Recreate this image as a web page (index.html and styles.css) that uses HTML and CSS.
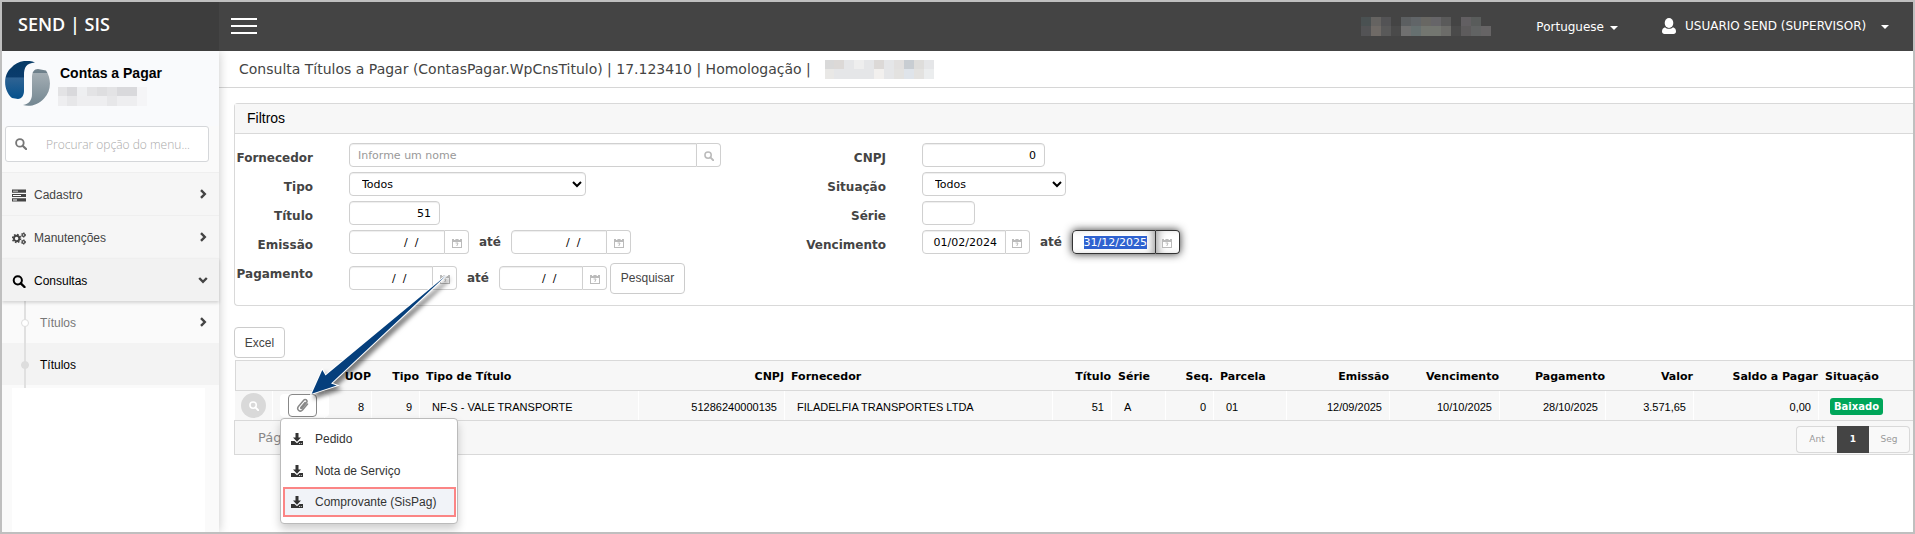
FILE: index.html
```html
<!DOCTYPE html>
<html lang="pt-BR">
<head>
<meta charset="utf-8">
<title>SEND | SIS - Consulta Títulos a Pagar</title>
<link rel="stylesheet" href="styles.css">
</head>
<body>
<svg class="defs" aria-hidden="true">
  <symbol id="i-search" viewBox="0 0 13 13"><circle cx="5.3" cy="5.3" r="4.1" fill="none" stroke="currentColor" stroke-width="2"/><path d="M8.3 8.3L12 12" stroke="currentColor" stroke-width="2.4" stroke-linecap="round"/></symbol>
  <symbol id="i-chev" viewBox="0 0 8 10"><path d="M2 1.2L5.8 5L2 8.8" fill="none" stroke="currentColor" stroke-width="2.4"/></symbol>
  <symbol id="i-cal" viewBox="0 0 10 10"><path d="M0 1h10v9H0z" fill="currentColor"/><path d="M1 4h8v5H1z" fill="#fff"/><path d="M2 0h1.400v2H2zM6.600 0H8v2H6.600z" fill="#fff"/><path d="M3.600 5h2.400L4.800 8" fill="none" stroke="currentColor"/></symbol>
  <symbol id="i-down" viewBox="0 0 12 12"><path d="M4.500 0h3v4.500H10L6 8.700 2 4.500h2.500z" fill="currentColor"/><path d="M0 8h3.500L6 10.200 8.500 8H12v4H0z" fill="currentColor"/><path d="M8 10.200h1v.9H8zM9.800 10.200h1v.9h-1z" fill="#fff"/></symbol>
  <symbol id="i-caret" viewBox="0 0 8 4"><path d="M0 0h8L4 4z" fill="currentColor"/></symbol>
</svg>
<div class="frame">
  <header class="topbar">
    <a class="brand" href="#">SEND | SIS</a>
    <div class="topbar-main">
      <button class="burger" type="button" aria-label="Alternar menu"><span></span><span></span><span></span></button>
      <svg class="mosaic mosaic-top" viewBox="0 0 130 19" preserveAspectRatio="none" shape-rendering="crispEdges" aria-hidden="true">
        <path fill="#4a5152" d="M0 0h10v9H0z"/><path fill="#656361" d="M10 0h10v9H10z"/><path fill="#535355" d="M20 0h10v9H20zM0 9h10v10H0z"/><path fill="#5c5f61" d="M40 0h10v9H40z"/><path fill="#616568" d="M50 0h10v9H50z"/><path fill="#686763" d="M60 0h10v9H60z"/><path fill="#666568" d="M70 0h10v9H70z"/><path fill="#5a5a5a" d="M80 0h10v9H80z"/><path fill="#625f62" d="M100 0h10v9h-10z"/><path fill="#595c5b" d="M110 0h10v9h-10z"/>
        <path fill="#6f6a66" d="M10 9h10v10H10z"/><path fill="#595959" d="M20 9h10v10H20z"/><path fill="#4a4a4a" d="M30 9h10v10H30zM90 9h10v10H90z"/><path fill="#707070" d="M40 9h10v10H40z"/><path fill="#667070" d="M50 9h10v10H50z"/><path fill="#737670" d="M60 9h20v10H60z"/><path fill="#6c6c69" d="M80 9h10v10H80z"/><path fill="#5d5b5c" d="M100 9h10v10h-10z"/><path fill="#616363" d="M110 9h10v10h-10z"/><path fill="#666465" d="M120 9h10v10h-10z"/>
      </svg>
      <button class="topmenu topmenu-lang" type="button">Portuguese<svg class="caret"><use href="#i-caret"/></svg></button>
      <button class="topmenu topmenu-user" type="button"><svg class="user" viewBox="0 0 14 16"><ellipse cx="7" cy="5" rx="4.300" ry="5" fill="#fff"/><path d="M3 9.200c2 2 6 2 8 0 2 .6 3 2.300 3 4.300 0 1.600-1 2.500-2.500 2.500h-9C1 16 0 15.100 0 13.500c0-2 1-3.700 3-4.300z" fill="#fff"/></svg>USUARIO SEND (SUPERVISOR)<svg class="caret"><use href="#i-caret"/></svg></button>
    </div>
  </header>
  <div class="body">
    <aside class="sidebar">
      <div class="profile">
        <svg class="logo" viewBox="0 0 45 45" aria-hidden="true">
          <defs>
            <linearGradient id="g1" x1="0" y1="0" x2="0" y2="1"><stop offset="0" stop-color="#063a66"/><stop offset=".42" stop-color="#0a3c6c"/><stop offset=".45" stop-color="#2f6393"/><stop offset="1" stop-color="#04508c"/></linearGradient>
            <linearGradient id="g2" x1="0" y1="0" x2="0" y2="1"><stop offset="0" stop-color="#73848e"/><stop offset=".1" stop-color="#6d7f8a"/><stop offset=".12" stop-color="#a3adb3"/><stop offset="1" stop-color="#738691"/></linearGradient>
          </defs>
          <path d="M30 1.500C21 2 19 7 19 14v16c0 5-3 8-6 8l-6-1C-2 29-2 14 6 7c6-7 16-9 24-5.500z" fill="url(#g1)"/>
          <path d="M27 16c0-5 2-8 6-8l8 1.500c6 9 5 21-2 28-6 7-15 8.500-21 6.500 6-1 9-5 9-11z" fill="url(#g2)"/>
        </svg>
        <div>
          <h2 class="profile-name">Contas a Pagar</h2>
          <svg class="mosaic mosaic-side" viewBox="0 0 89 19" preserveAspectRatio="none" shape-rendering="crispEdges" aria-hidden="true">
            <path fill="#e3e3e5" d="M0 0h79v9H0z"/><path fill="#d9d9dc" d="M9 0h10v9H9zM59 0h20v9H59z"/><path fill="#eeeff1" d="M19 0h10v9H19z"/><path fill="#dedee0" d="M39 0h10v9H39z"/><path fill="#f5f5f7" d="M79 0h10v19H79z"/><path fill="#eeeef0" d="M0 9h79v10H0z"/><path fill="#e7e7e9" d="M9 9h10v10H9zM49 9h10v10H49z"/>
          </svg>
        </div>
      </div>
      <label class="menu-search"><svg><use href="#i-search"/></svg><input type="text" placeholder="Procurar opção do menu..." aria-label="Procurar opção do menu"></label>
      <nav class="menu">
        <a class="menu-item" href="#"><svg class="menu-icon" viewBox="0 0 14 12"><path d="M0 0h14v3.200H0zM0 4.400h14v3.200H0zM0 8.800h14V12H0z" fill="currentColor"/><path d="M1 1.200h5v.9H1zM1 5.600h8v.9H1zM1 10h4v.9H1z" fill="#fff"/></svg>Cadastro<svg class="chev"><use href="#i-chev"/></svg></a>
        <a class="menu-item" href="#"><svg class="menu-icon" viewBox="0 0 14 13"><g fill="none" stroke="currentColor"><circle cx="4.600" cy="6.500" r="2.700" stroke-width="1.900"/><circle cx="4.600" cy="6.500" r="4" stroke-width="1.500" stroke-dasharray="1.570 1.570"/><circle cx="11.500" cy="3" r="1.400" stroke-width="1.200"/><circle cx="11.500" cy="3" r="2.200" stroke-dasharray="1.150 1.150"/><circle cx="11.500" cy="10" r="1.400" stroke-width="1.200"/><circle cx="11.500" cy="10" r="2.200" stroke-dasharray="1.150 1.150"/></g></svg>Manutenções<svg class="chev"><use href="#i-chev"/></svg></a>
        <a class="menu-item menu-item-open" href="#"><svg class="menu-icon"><use href="#i-search"/></svg>Consultas<svg class="chev chev-down"><use href="#i-chev"/></svg></a>
        <div class="submenu">
          <a class="sub-item" href="#"><i class="dot"></i>Títulos<svg class="chev"><use href="#i-chev"/></svg></a>
          <a class="sub-item sub-item-on" href="#"><i class="dot"></i>Títulos</a>
        </div>
      </nav>
      <div class="menu-rest"></div>
    </aside>
    <main class="main">
      <h1 class="title">Consulta Títulos a Pagar (ContasPagar.WpCnsTitulo) | 17.123410 | Homologação |
        <svg class="mosaic mosaic-title" viewBox="0 0 109 19" preserveAspectRatio="none" shape-rendering="crispEdges" aria-hidden="true">
          <path fill="#e5e6e8" d="M0 0h109v19H0z"/><path fill="#d9d9d9" d="M0 0h9v9H0z"/><path fill="#dcd9d7" d="M9 0h10v9H9zM49 0h10v9H49z"/><path fill="#eee" d="M29 0h10v9H29z"/><path fill="#e2e0df" d="M69 0h10v9H69z"/><path fill="#c8cdd2" d="M79 0h10v9H79z"/><path fill="#dedddb" d="M89 0h10v9H89z"/><path fill="#e9e8e6" d="M0 9h9v10H0z"/><path fill="#f2f0ee" d="M49 9h10v10H49z"/><path fill="#e3e2e0" d="M69 9h10v10H69zM89 9h10v10H89z"/><path fill="#dfe4ea" d="M79 9h10v10H79z"/><path fill="#ebedee" d="M99 9h10v10H99z"/>
        </svg>
      </h1>
      <form class="panel">
        <h2 class="panel-head">Filtros</h2>
        <div class="filters">
          <div class="col">
            <div class="row"><label for="forn">Fornecedor</label><div class="field"><span class="group"><input id="forn" class="w-name" type="text" placeholder="Informe um nome"><button type="button" aria-label="Buscar fornecedor"><svg><use href="#i-search"/></svg></button></span></div></div>
            <div class="row"><label for="tipo">Tipo</label><div class="field"><select id="tipo" class="w-tipo"><option>Todos</option></select></div></div>
            <div class="row"><label for="tit">Título</label><div class="field"><input id="tit" class="num w-tit" type="text" value="51"></div></div>
            <div class="row"><label for="em1">Emissão</label><div class="field"><span class="group"><input id="em1" class="num w-date" type="text" value="  /  /     "><button type="button" aria-label="Calendário"><svg><use href="#i-cal"/></svg></button></span><label class="ate" for="em2">até</label><span class="group"><input id="em2" class="num w-date" type="text" value="  /  /     "><button type="button" aria-label="Calendário"><svg><use href="#i-cal"/></svg></button></span></div></div>
            <div class="row row-last"><label for="pg1">Pagamento</label><div class="field"><span class="group"><input id="pg1" class="num w-short" type="text" value="  /  /     "><button type="button" aria-label="Calendário"><svg><use href="#i-cal"/></svg></button></span><label class="ate" for="pg2">até</label><span class="group"><input id="pg2" class="num w-short" type="text" value="  /  /     "><button type="button" aria-label="Calendário"><svg><use href="#i-cal"/></svg></button></span><button class="btn btn-search" type="button">Pesquisar</button></div></div>
          </div>
          <div class="col col-right">
            <div class="row"><label for="cnpj">CNPJ</label><div class="field"><input id="cnpj" class="num w-cnpj" type="text" value="0"></div></div>
            <div class="row"><label for="sit">Situação</label><div class="field"><select id="sit" class="w-sit"><option>Todos</option></select></div></div>
            <div class="row"><label for="serie">Série</label><div class="field"><input id="serie" class="w-serie" type="text"></div></div>
            <div class="row"><label for="ve1">Vencimento</label><div class="field"><span class="group"><input id="ve1" class="num w-short" type="text" value="01/02/2024"><button type="button" aria-label="Calendário"><svg><use href="#i-cal"/></svg></button></span><label class="ate" for="ve2">até</label><span class="group group-focus"><input id="ve2" class="num w-short" type="text" value="31/12/2025"><button type="button" aria-label="Calendário"><svg><use href="#i-cal"/></svg></button></span></div></div>
          </div>
        </div>
      </form>
      <button class="btn btn-excel" type="button">Excel</button>
      <table class="grid">
        <colgroup><col class="c-view"><col class="c-clip"><col class="c-uop"><col class="c-tipo"><col class="c-desc"><col class="c-cnpj"><col><col class="c-titulo"><col class="c-serie"><col class="c-tipo"><col class="c-parcela"><col class="c-emissao"><col class="c-venc"><col class="c-pag"><col class="c-valor"><col class="c-saldo"><col class="c-sit"></colgroup>
        <thead><tr><th></th><th></th><th class="r">UOP</th><th class="r">Tipo</th><th>Tipo de Título</th><th class="r">CNPJ</th><th>Fornecedor</th><th class="r">Título</th><th>Série</th><th class="r">Seq.</th><th>Parcela</th><th class="r">Emissão</th><th class="r">Vencimento</th><th class="r">Pagamento</th><th class="r">Valor</th><th class="r">Saldo a Pagar</th><th>Situação</th></tr></thead>
        <tbody><tr>
          <td class="cell-view"><button class="view" type="button" aria-label="Visualizar"><svg><use href="#i-search"/></svg></button></td>
          <td class="cell-clip"><div class="clip-wrap"><button class="clip" type="button" aria-label="Anexos"><svg viewBox="0 0 14 15"><path d="M9.800 4.200L5.300 9.600c-.5.700.4 1.500 1 .8l5-6c1.700-2.200-1.200-4.700-3-2.600L2.600 8.600c-2.400 3.200 1.700 6.700 4.400 3.700L12.400 6" fill="none" stroke="currentColor" stroke-width="1.600" stroke-linecap="round"/></svg></button>
            <div class="dropdown">
              <a href="#"><svg><use href="#i-down"/></svg>Pedido</a>
              <a href="#"><svg><use href="#i-down"/></svg>Nota de Serviço</a>
              <a class="on" href="#"><svg><use href="#i-down"/></svg>Comprovante (SisPag)</a>
            </div></div></td>
          <td class="r">8</td><td class="r">9</td><td>NF-S - VALE TRANSPORTE</td><td class="r">51286240000135</td><td>FILADELFIA TRANSPORTES LTDA</td><td class="r">51</td><td>A</td><td class="r">0</td><td>01</td><td class="r">12/09/2025</td><td class="r">10/10/2025</td><td class="r">28/10/2025</td><td class="r">3.571,65</td><td class="r">0,00</td><td class="cell-badge"><span class="badge">Baixado</span></td>
        </tr></tbody>
      </table>
      <div class="pager">
        <span>Pág.</span>
        <div class="pages"><button type="button">Ant</button><button class="on" type="button">1</button><button type="button">Seg</button></div>
      </div>
      <svg class="arrow" viewBox="0 0 160 140" aria-hidden="true"><path d="M11.700 123.700L22.300 100 25.500 105.500 146.700 5 31 113.500 36.700 115.500z"/></svg>
    </main>
  </div>
</div>
<script src="app.js"></script>
</body>
</html>
```
FILE: styles.css
```css
* { box-sizing: border-box; }
body { margin: 0; font-family: "DejaVu Sans", Verdana, sans-serif; font-size: 12px; color: #444; background: #fff; }
button, input, select { font: inherit; margin: 0; }
button { cursor: pointer; }
a { color: inherit; text-decoration: none; }
h1, h2 { margin: 0; font-weight: normal; }
svg { display: block; flex: none; }
.defs { display: none; }
.frame { min-height: 100vh; border: 2px solid #bfbfbf; display: flex; flex-direction: column; }

.topbar { display: flex; height: 49px; color: #fff; background: #444; }
.brand { width: 217px; padding: 9px 16px; background: #3d3d3d; font: 600 18px/26px "Open Sans", sans-serif; }
.topbar-main { flex: 1; display: flex; align-items: center; padding: 0 24px 10px 12px; }
.burger { width: 26px; padding: 8px 0 0; border: 0; background: none; display: grid; gap: 5px; margin-right: auto; }
.burger span { height: 2px; background: #fff; }
.mosaic-top { width: 130px; height: 19px; margin: 10px 45px 0 0; }
.topmenu { display: flex; align-items: center; padding: 8px 0 0; border: 0; background: none; color: #fff; font-size: 12px; line-height: 16px; }
.topmenu-lang { margin-right: 44px; padding-top: 10px; }
.topmenu-user { width: 227px; }
.topmenu-user .caret { margin-left: auto; }
.caret { width: 8px; height: 4px; margin: 3px 0 0 6px; }
.user { width: 14px; height: 16px; margin-right: 9px; }

.body { flex: 1; display: flex; }
.sidebar { position: relative; z-index: 1; width: 217px; display: flex; flex-direction: column; background: #fafafa; box-shadow: 0 0 10px rgba(0, 0, 0, .22); clip-path: inset(0 -20px 0 0); font: 12px "Liberation Sans", Arial, sans-serif; }
.profile { display: flex; gap: 10px; padding: 10px 3px 20px; background: #f9fafc; }
.logo { width: 45px; height: 45px; }
.profile-name { padding-top: 3px; font-size: 14px; line-height: 18px; font-weight: bold; color: #000; }
.mosaic-side { width: 89px; height: 19px; margin: 5px 0 0 -2px; }
.menu-search { display: flex; align-items: center; height: 36px; margin: 0 10px 10px 3px; padding-left: 9px; border: 1px solid #d5d7da; border-radius: 3px; background: #fff; color: #777; }
.menu-search svg { width: 12px; height: 12px; }
.menu-search input { flex: 1; min-width: 0; border: 0; padding: 0 0 0 19px; outline: 0; background: none; font: 300 12px "Open Sans", sans-serif; }
.menu-search input::placeholder { color: #aaa; }
.menu-item { display: flex; align-items: center; height: 43px; padding: 2px 12px 0 10px; border-top: 1px solid #efefef; background: #f6f6f6; color: #444; }
.menu-item-open { background: #f2f2f2; color: #000; box-shadow: 0 2px 3px rgba(0, 0, 0, .15); position: relative; }
.menu-icon { width: 14px; height: 13px; margin-right: 8px; }
.chev { width: 8px; height: 10px; margin: 0 0 3px auto; color: #444; }
.chev-down { transform: rotate(90deg); }
.submenu { padding-bottom: 3px; background: linear-gradient(#e0e0e0, #e0e0e0) 22px 0 / 2px 100% no-repeat; }
.sub-item { display: flex; align-items: center; height: 42px; padding: 2px 12px 0 19px; color: #777; }
.sub-item-on { color: #000; background: linear-gradient(#e0e0e0, #e0e0e0) 22px 0 / 2px 100% no-repeat #f3f3f3; }
.dot { width: 8px; height: 8px; margin-right: 11px; border: 1px solid #ddd; border-radius: 50%; background: #fff; }
.sub-item-on .dot { background: #ddd; }
.menu-rest { flex: 1; margin: 0 14px 0 10px; background: #fff; }

.main { position: relative; flex: 1; min-width: 0; display: flex; flex-direction: column; }
.title { display: flex; align-items: center; gap: 14px; height: 37px; padding: 0 20px; border-bottom: 1px solid #d6d6d6; font-size: 14px; line-height: 20px; }
.mosaic-title { width: 109px; height: 19px; }
.panel { margin: 15px 0 0 15px; border: 1px solid #d9d9d9; border-right: 0; border-radius: 4px 0 0 4px; }
.panel-head { height: 30px; padding: 0 12px; border-bottom: 1px solid #d9d9d9; background: #f7f7f7; font: 14px/29px "Liberation Sans", Arial, sans-serif; color: #000; }
.filters { display: grid; grid-template-columns: 32% 1fr; padding: 9px 0 10px; }
.row { display: grid; grid-template-columns: 78px 1fr; gap: 36px; height: 29px; }
.col-right .row { grid-template-columns: 114px 1fr; }
.row > label { padding-top: 7px; text-align: right; font-size: 12px; line-height: 16px; font-weight: bold; }
.row-last { height: 36px; }
.field { display: flex; align-items: flex-start; }
.row-last .field { align-items: center; padding-top: 2px; }
.ate { width: 42px; text-align: center; font-size: 12px; line-height: 24px; font-weight: bold; }
.field input, .field select { height: 24px; padding: 0 8px; border: 1px solid #d0d0d0; border-radius: 4px; background: #fff; color: #000; font-size: 11px; outline: 0; box-shadow: inset 0 1px 1px rgba(0, 0, 0, .07); }
.field input::placeholder { color: #999; }
.field .num { text-align: right; }
.group { display: flex; border-radius: 4px; }
.field .group input { border-radius: 4px 0 0 4px; }
.group button { width: 24px; height: 24px; display: grid; place-items: center; padding: 2px 0 0; border: 1px solid #d0d0d0; border-left: 0; border-radius: 0 4px 4px 0; background: #fff; color: #bbb; }
.group button svg { width: 10px; height: 10px; }
.group-focus { box-shadow: 0 0 8px #333; }
.field .group-focus input, .group-focus button { border-color: #333; }
.field .group-focus input { box-shadow: inset -6px 0 8px -4px #999; }
.group-focus button { box-shadow: inset 6px 0 8px -4px #999; }
::selection { background: #2f62d0; color: #fff; }
.w-name { width: 348px; }
.w-tipo { width: 237px; }
.w-tit { width: 91px; }
.w-date { width: 96px; }
.w-short { width: 84px; }
.w-cnpj { width: 123px; }
.w-sit { width: 144px; }
.w-serie { width: 53px; }
.btn { height: 31px; padding: 0; border: 1px solid #ccc; border-radius: 4px; background: #fff; color: #444; font: 12px "Liberation Sans", Arial, sans-serif; }
.btn-search { width: 75px; margin-left: 3px; }
.btn-excel { width: 51px; margin: 21px 0 2px 15px; }

.grid { margin-left: 16px; width: calc(100% - 16px); table-layout: fixed; border-collapse: separate; border-spacing: 0; color: #000; }
.c-view { width: 38px; }
.c-clip { width: 52px; }
.c-uop { width: 47px; }
.c-tipo { width: 48px; }
.c-desc { width: 219px; }
.c-cnpj { width: 146px; }
.c-titulo { width: 59px; }
.c-serie { width: 54px; }
.c-parcela { width: 73px; }
.c-emissao { width: 103px; }
.c-venc { width: 110px; }
.c-pag { width: 106px; }
.c-valor { width: 88px; }
.c-saldo { width: 125px; }
.c-sit { width: 94px; }
.grid th { height: 31px; padding: 2px 1px 0 6px; border: 0 solid #d9d9d9; border-width: 1px 0; background: #f7f7f7; font-size: 11px; text-align: left; white-space: nowrap; }
.grid th:first-child { border-left-width: 1px; }
.grid td { height: 29px; padding: 2px 7px 0 12px; border-right: 1px solid #fff; background: #f7f7f7; font: 11px "Liberation Sans", Arial, sans-serif; white-space: nowrap; }
.grid td:last-child { border-right: 0; }
.grid .r { text-align: right; }
.grid .cell-view { padding: 0 0 0 6px; }
.grid .cell-clip { padding: 0 0 0 7px; font-size: 12px; }
.grid .cell-badge { padding: 1px 0 0 11px; }
.view { width: 25px; height: 25px; display: grid; place-items: center; padding: 0; border: 0; border-radius: 50%; background: #d9d9d9; color: #fff; }
.view svg { width: 10px; height: 10px; }
.clip-wrap { position: relative; width: 49px; padding: 0 8px; border-radius: 4px; background: #fff; }
.clip { width: 29px; height: 23px; display: grid; place-items: center; padding: 0; border: 1px solid #888; border-radius: 4px; background: #fff; color: #888; }
.clip svg { width: 13px; height: 15px; }
.dropdown { position: absolute; z-index: 2; top: 100%; left: 0; margin-top: 1px; width: 178px; padding: 4px 2px 6px; border: 1px solid #bbb; border-radius: 4px; background: #fff; box-shadow: 0 5px 10px rgba(0, 0, 0, .2); color: #333; }
.dropdown a { display: flex; align-items: center; gap: 12px; height: 32px; padding-left: 8px; }
.dropdown svg { width: 12px; height: 12px; }
.dropdown .on { height: 30px; padding-left: 6px; border: 2px solid #fb8585; background: #f1f3f8; margin-right: -1px; }
.badge { display: inline-block; height: 17px; padding: 0 4px; border-radius: 3px; background: #00a65a; color: #fff; font: bold 10px/17px "DejaVu Sans", Verdana, sans-serif; }
.pager { display: flex; justify-content: space-between; align-items: center; height: 35px; margin-left: 15px; padding: 0 3px 0 23px; border: 1px solid #d9d9d9; border-right: 0; background: #f7f7f7; font-size: 13px; color: #888; }
.pages { display: flex; padding-top: 3px; }
.pages button { width: 41px; height: 27px; padding: 0; border: 1px solid #d9d9d9; background: #f9f9f9; color: #999; font-size: 9px; }
.pages button:first-child { border-right: 0; border-radius: 4px 0 0 4px; }
.pages button:last-child { border-left: 0; border-radius: 0 4px 4px 0; }
.pages .on { width: 32px; border-color: #444; background: #444; color: #fff; font-weight: bold; }
.arrow { position: absolute; z-index: 3; left: 81px; top: 219px; width: 160px; height: 140px; pointer-events: none; filter: drop-shadow(3px 4px 2px rgba(0, 0, 0, .5)); overflow: visible; }
.arrow path { fill: #053f7c; stroke: #fff; stroke-width: 2; paint-order: stroke; }
```
FILE: app.js
```
document.getElementById('ve2').select();
```
